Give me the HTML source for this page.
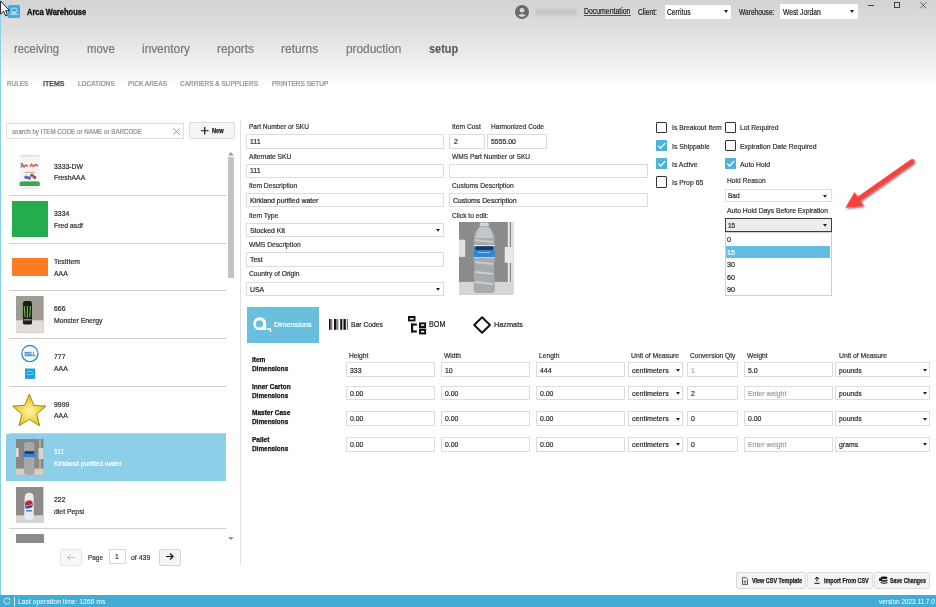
<!DOCTYPE html>
<html><head><meta charset="utf-8"><style>
html,body{margin:0;padding:0;}
body{width:936px;height:607px;position:relative;overflow:hidden;background:#fff;font-family:"Liberation Sans",sans-serif;}
.t{position:absolute;white-space:nowrap;line-height:1.117;transform-origin:0 0;-webkit-text-stroke-width:0.2px;}
.r{position:absolute;box-sizing:border-box;}
svg{position:absolute;overflow:visible;}
</style></head><body>
<div class="r" style="left:0px;top:0px;width:936px;height:88px;background:linear-gradient(#d3d3d3 0%,#e1e1e1 40%,#f2f2f2 75%,#fff 100%);"></div>
<div class="r" style="left:0px;top:0px;width:1px;height:595px;background:#8dd0e8;"></div>
<div class="r" style="left:7.8px;top:4.7px;width:12.7px;height:13.2px;background:#3aaee0;border-radius:1.6px;"></div>
<svg style="left:0;top:0" width="22" height="20" viewBox="0 0 22 20"><ellipse cx="14.1" cy="10.1" rx="3.3" ry="2.1" stroke="#c4eafa" stroke-width="0.9" fill="none"/><rect x="11.3" y="12.2" width="5.6" height="1.3" fill="#c4eafa"/><rect x="9.4" y="14.2" width="9.4" height="0.8" fill="#c4eafa"/></svg>
<div class="t" style="left:26.70px;top:6.79px;font-size:9.4px;color:#111;font-weight:bold;-webkit-text-stroke-width:0.25px;transform:scaleX(0.803);-webkit-text-stroke-width:0.4px;">Arca Warehouse</div>
<svg style="left:514.5px;top:4.5px" width="14" height="14" viewBox="0 0 14 14"><circle cx="7" cy="7" r="7" fill="#6a6a6a"/><circle cx="7" cy="5.3" r="2.3" fill="#dcdcdc"/><path d="M3.2 10.6 Q7 7.6 10.8 10.6 Q7 13 3.2 10.6Z" fill="#dcdcdc"/></svg>
<div class="r" style="left:535px;top:8.5px;width:42px;height:6.5px;background:#c4c4c4;filter:blur(1.8px);border-radius:3px;"></div>
<div class="t" style="left:584.00px;top:7.28px;font-size:8.2px;color:#222;transform:scaleX(0.843);">Documentation</div>
<div class="r" style="left:584px;top:15.2px;width:46.5px;height:0.7px;background:#555;"></div>
<div class="t" style="left:637.90px;top:7.88px;font-size:8.2px;color:#222;transform:scaleX(0.818);">Client:</div>
<div class="r" style="left:664.5px;top:4.5px;width:66.5px;height:14.5px;background:#fff;"></div>
<div class="t" style="left:667.40px;top:8.28px;font-size:8.2px;color:#222;transform:scaleX(0.822);">Cerritus</div>
<svg style="left:723.5px;top:10px" width="4" height="3"><path d="M0 0H4L2 3Z" fill="#222"/></svg>
<div class="t" style="left:738.50px;top:7.88px;font-size:8.2px;color:#222;transform:scaleX(0.808);">Warehouse:</div>
<div class="r" style="left:780px;top:4px;width:78px;height:15px;background:#fff;"></div>
<div class="t" style="left:782.80px;top:8.28px;font-size:8.2px;color:#222;transform:scaleX(0.822);">West Jordan</div>
<svg style="left:850.3px;top:10px" width="4" height="3"><path d="M0 0H4L2 3Z" fill="#222"/></svg>
<div class="r" style="left:868px;top:4.6px;width:5.8px;height:0.8px;background:#444;"></div>
<div class="r" style="left:893.6px;top:2.2px;width:6.2px;height:6px;border:0.8px solid #444;"></div>
<svg style="left:919.5px;top:2px" width="7" height="7"><path d="M0.3 0.3L6.3 6.3M6.3 0.3L0.3 6.3" stroke="#444" stroke-width="0.8"/></svg>
<svg style="left:0px;top:0px" width="14" height="20" viewBox="0 0 14 20"><path d="M0.6 1 L0.6 14 L3.7 11.3 L5.7 16 L7.5 15.2 L5.6 10.7 L9.6 10.7 Z" fill="#fff" stroke="#222" stroke-width="1" stroke-linejoin="round"/></svg>
<div class="t" style="left:14.40px;top:41.64px;font-size:13px;color:#777;transform:scaleX(0.865);">receiving</div>
<div class="t" style="left:86.70px;top:41.64px;font-size:13px;color:#777;transform:scaleX(0.871);">move</div>
<div class="t" style="left:141.80px;top:41.64px;font-size:13px;color:#777;transform:scaleX(0.910);">inventory</div>
<div class="t" style="left:217.20px;top:41.64px;font-size:13px;color:#777;transform:scaleX(0.915);">reports</div>
<div class="t" style="left:281.40px;top:41.64px;font-size:13px;color:#777;transform:scaleX(0.920);">returns</div>
<div class="t" style="left:345.80px;top:41.64px;font-size:13px;color:#777;transform:scaleX(0.911);">production</div>
<div class="t" style="left:428.60px;top:41.64px;font-size:13px;color:#5a5a5a;font-weight:bold;-webkit-text-stroke-width:0.25px;transform:scaleX(0.842);-webkit-text-stroke-width:0.1px;">setup</div>
<div class="t" style="left:7.40px;top:79.76px;font-size:8px;color:#8a8a8a;transform:scaleX(0.798);">RULES</div>
<div class="t" style="left:42.60px;top:79.76px;font-size:8px;color:#555;font-weight:bold;-webkit-text-stroke-width:0.25px;transform:scaleX(0.879);">ITEMS</div>
<div class="t" style="left:77.70px;top:79.76px;font-size:8px;color:#8a8a8a;transform:scaleX(0.804);">LOCATIONS</div>
<div class="t" style="left:127.70px;top:79.76px;font-size:8px;color:#8a8a8a;transform:scaleX(0.820);">PICK AREAS</div>
<div class="t" style="left:180.30px;top:79.76px;font-size:8px;color:#8a8a8a;transform:scaleX(0.812);">CARRIERS &amp; SUPPLIERS</div>
<div class="t" style="left:272.20px;top:79.76px;font-size:8px;color:#8a8a8a;transform:scaleX(0.813);">PRINTERS SETUP</div>
<div class="r" style="left:240px;top:119.5px;width:1px;height:445px;background:#dfe0e6;"></div>
<div class="r" style="left:6px;top:123px;width:178px;height:15.5px;border:1px solid #dedede;background:#fff;"></div>
<div class="t" style="left:11.50px;top:127.64px;font-size:7.8px;color:#8a8a8a;transform:scaleX(0.798);">search by ITEM CODE or NAME or BARCODE</div>
<svg style="left:173.2px;top:128px" width="7" height="7"><path d="M0.3 0.3L6.7 6.7M6.7 0.3L0.3 6.7" stroke="#888" stroke-width="0.8"/></svg>
<div class="r" style="left:189.4px;top:122px;width:45.2px;height:17.4px;border:1px solid #dcdcdc;background:#f5f5f5;border-radius:2px;"></div>
<svg style="left:201px;top:127px" width="7.5" height="7.5"><path d="M3.75 0V7.5M0 3.75H7.5" stroke="#111" stroke-width="1.2"/></svg>
<div class="t" style="left:212.00px;top:126.91px;font-size:7.5px;color:#111;font-weight:bold;-webkit-text-stroke-width:0.25px;transform:scaleX(0.745);">New</div>
<div class="t" style="left:53.80px;top:162.64px;font-size:7.8px;color:#262626;transform:scaleX(0.880);">3333-DW</div>
<div class="t" style="left:53.80px;top:174.44px;font-size:7.8px;color:#262626;transform:scaleX(0.880);">FreshAAA</div>
<div class="t" style="left:53.80px;top:210.24px;font-size:7.8px;color:#262626;transform:scaleX(0.880);">3334</div>
<div class="t" style="left:53.80px;top:222.04px;font-size:7.8px;color:#262626;transform:scaleX(0.880);">Fred asdf</div>
<div class="t" style="left:53.80px;top:257.84px;font-size:7.8px;color:#262626;transform:scaleX(0.880);">TestItem</div>
<div class="t" style="left:53.80px;top:269.64px;font-size:7.8px;color:#262626;transform:scaleX(0.880);">AAA</div>
<div class="t" style="left:53.80px;top:305.44px;font-size:7.8px;color:#262626;transform:scaleX(0.880);">666</div>
<div class="t" style="left:53.80px;top:317.24px;font-size:7.8px;color:#262626;transform:scaleX(0.880);">Monster Energy</div>
<div class="t" style="left:53.80px;top:353.04px;font-size:7.8px;color:#262626;transform:scaleX(0.880);">777</div>
<div class="t" style="left:53.80px;top:364.84px;font-size:7.8px;color:#262626;transform:scaleX(0.880);">AAA</div>
<div class="t" style="left:53.80px;top:400.64px;font-size:7.8px;color:#262626;transform:scaleX(0.880);">9999</div>
<div class="t" style="left:53.80px;top:412.44px;font-size:7.8px;color:#262626;transform:scaleX(0.880);">AAA</div>
<div class="r" style="left:6.3px;top:433.6px;width:220.1px;height:47.8px;background:#8dcfe8;"></div>
<div class="t" style="left:53.80px;top:448.24px;font-size:7.8px;color:#fff;transform:scaleX(0.880);">111</div>
<div class="t" style="left:53.80px;top:460.04px;font-size:7.8px;color:#fff;transform:scaleX(0.880);">Kirkland purified water</div>
<div class="t" style="left:53.80px;top:495.84px;font-size:7.8px;color:#262626;transform:scaleX(0.880);">222</div>
<div class="t" style="left:53.80px;top:507.64px;font-size:7.8px;color:#262626;transform:scaleX(0.880);">diet Pepsi</div>
<div class="r" style="left:9px;top:195.3px;width:217.4px;height:1px;background:#cfcfcf;"></div>
<div class="r" style="left:9px;top:243px;width:217.4px;height:1px;background:#cfcfcf;"></div>
<div class="r" style="left:9px;top:290.3px;width:217.4px;height:1px;background:#cfcfcf;"></div>
<div class="r" style="left:9px;top:338.2px;width:217.4px;height:1px;background:#cfcfcf;"></div>
<div class="r" style="left:9px;top:386px;width:217.4px;height:1px;background:#cfcfcf;"></div>
<div class="r" style="left:9px;top:433.2px;width:217.4px;height:1px;background:#cfcfcf;"></div>
<div class="r" style="left:9px;top:528.4px;width:217.4px;height:1px;background:#cfcfcf;"></div>
<svg style="left:228px;top:151.5px" width="6" height="4"><path d="M0 3.5H5.8L2.9 0Z" fill="#9a9a9a"/></svg>
<div class="r" style="left:227.5px;top:157.4px;width:6.4px;height:120.6px;background:#c2c2c2;"></div>
<svg style="left:228px;top:536.5px" width="6" height="4"><path d="M0 0H5.8L2.9 3.3Z" fill="#9a9a9a"/></svg>
<svg style="left:19px;top:154px" width="22" height="36" viewBox="0 0 22 36"><ellipse cx="10.5" cy="34" rx="10" ry="1.5" fill="#e4e4e4"/><rect x="0.6" y="0.8" width="20.1" height="33.4" rx="1.8" fill="#f3f5f6"/><rect x="0.6" y="0.8" width="20.1" height="1.8" fill="#dfe3e6"/><path d="M2 13.5 L3.5 10.5 L5 13 L7 11 L9 12.5 M11 12.5 L12.5 10.5 L14.5 12.5 L16.5 10.5 L19 12" stroke="#e4553c" stroke-width="1.5" fill="none"/><rect x="1.5" y="9" width="2.5" height="1.4" fill="#3aa84a"/><rect x="6" y="17.8" width="10" height="0.9" fill="#ee8c5a"/><circle cx="7.2" cy="23.2" r="1.8" fill="#3a63c8"/><circle cx="10.2" cy="24" r="1.8" fill="#8740b8"/><circle cx="12.9" cy="21.3" r="1.8" fill="#2f8a48"/><circle cx="15.5" cy="23.2" r="1.8" fill="#d83a3a"/><path d="M0.6 28 Q5 26.6 10.5 27.6 Q16 26.6 20.7 27.8 L20.7 32 L0.6 32Z" fill="#3aa84a"/></svg>
<div class="r" style="left:12px;top:201.2px;width:36px;height:35.9px;background:#24ad4e;"></div>
<div class="r" style="left:12px;top:258px;width:36px;height:17.7px;background:#fb7c22;"></div>
<svg style="left:16.3px;top:296px" width="27.6" height="36.6" viewBox="0 0 27.6 36.6"><rect width="27.6" height="36.6" fill="#a19b95"/><rect y="24.3" width="27.6" height="12.3" fill="#e0dcd6"/><path d="M6.9 8 Q6.9 5 9 5 L14 5 Q16 5 16 8 L16 27 Q16 28.6 14 28.6 L9 28.6 Q6.9 28.6 6.9 27Z" fill="#1b1d1b"/><path d="M8.3 10 L9 21 M11.4 10 L11.4 22 M14.4 10 L13.8 21" stroke="#5fbf3a" stroke-width="1.1"/><rect x="7.5" y="23" width="8" height="1.5" fill="#8a8f8a"/></svg>
<svg style="left:20.8px;top:345.3px" width="18" height="35" viewBox="0 0 18 35"><circle cx="8.9" cy="8.6" r="8.1" fill="none" stroke="#1d8fd2" stroke-width="1.3"/><text x="8.9" y="10.5" font-family="Liberation Sans" font-weight="bold" font-size="5" fill="#1d8fd2" stroke="#1d8fd2" stroke-width="0.35" text-anchor="middle" textLength="11" lengthAdjust="spacingAndGlyphs">DELL</text><rect x="4" y="23.5" width="10.2" height="10.4" fill="#1ba3e3"/><path d="M5.5 27 Q9 25 12.5 27.5 M5.5 29.5 H12.5" stroke="#bfe8fa" stroke-width="0.6" fill="none"/></svg>
<svg style="left:12.3px;top:393.2px" width="35" height="34" viewBox="0 0 35 34"><defs><radialGradient id="sg" cx="0.5" cy="0.55" r="0.55"><stop offset="0" stop-color="#fbf3a8"/><stop offset="0.55" stop-color="#f1d84a"/><stop offset="1" stop-color="#d9b425"/></radialGradient></defs><path d="M17.30 1.00 L21.85 12.33 L34.04 13.16 L24.66 20.99 L27.65 32.84 L17.30 26.34 L6.95 32.84 L9.94 20.99 L0.56 13.16 L12.75 12.33Z" fill="url(#sg)" stroke="#a98512" stroke-width="1" stroke-linejoin="round"/></svg>
<svg style="left:16.4px;top:439.1px" width="27.5" height="36.3" viewBox="0 0 27.5 36.3"><rect width="27.5" height="36.3" fill="#8a8682"/><rect y="29.6" width="27.5" height="6.7" fill="#d6cec6"/><rect x="0" y="9" width="2.6" height="9" fill="#e0dcd8"/><rect x="22.5" y="9" width="5" height="11" fill="#dcd8d4"/><rect x="23.5" y="0" width="1" height="30" fill="#cfcac6"/><rect x="8" y="3" width="10.4" height="33" rx="3" fill="#a6a8aa"/><rect x="7.3" y="11.8" width="11.8" height="6.3" fill="#2d82d2"/><rect x="9" y="12.5" width="8.5" height="2" fill="#1c2744"/></svg>
<svg style="left:16.3px;top:486.9px" width="27.4" height="36" viewBox="0 0 27.4 36"><rect width="27.4" height="36" fill="#8d8a87"/><rect y="28.3" width="27.4" height="7.7" fill="#d8d4d0"/><path d="M8.6 14 Q8 6 12.5 5.8 Q17.5 5.6 17.6 10 L17.8 30 Q17.6 33 13 33 Q8.4 33 8.2 30Z" fill="#e8eaec"/><path d="M9.2 18.5 A4 4 0 0 1 17 16.2 Q13 19.5 9.2 18.5Z" fill="#c9243a"/><path d="M9.2 19 Q13 20 17 17 Q17 22 9.6 21.5Z" fill="#1f4e9e"/><rect x="10" y="23" width="6" height="1.6" fill="#5a7fc0"/></svg>
<div class="r" style="left:16.3px;top:534.1px;width:27.4px;height:8.7px;background:#8d8a88;"></div>
<div class="r" style="left:59.5px;top:548.6px;width:22.5px;height:17.4px;border:1px solid #e4e4e4;background:#f7f7f7;border-radius:2px;"></div>
<svg style="left:66.5px;top:553.5px" width="8" height="7"><path d="M0.5 3.5H7.5M3.5 0.5L0.5 3.5L3.5 6.5" stroke="#bbb" stroke-width="0.9" fill="none"/></svg>
<div class="t" style="left:88.00px;top:554.04px;font-size:7.8px;color:#333;transform:scaleX(0.824);">Page</div>
<div class="r" style="left:109px;top:549.4px;width:16.6px;height:14.3px;border:1px solid #d8d8d8;background:#fff;"></div>
<div class="t" style="left:115.30px;top:553.14px;font-size:7.8px;color:#333;transform:scaleX(0.880);">1</div>
<div class="t" style="left:131.30px;top:553.84px;font-size:7.8px;color:#333;transform:scaleX(0.893);">of  439</div>
<div class="r" style="left:158.5px;top:548.6px;width:22.3px;height:17.4px;border:1px solid #d4d4d4;background:#f4f4f4;border-radius:2px;"></div>
<svg style="left:165.5px;top:553.3px" width="8" height="7"><path d="M0 3.5H7M4 0.5L7 3.5L4 6.5" stroke="#111" stroke-width="1.2" fill="none"/></svg>
<div class="r" style="left:0px;top:595px;width:936px;height:12px;background:#41acd6;"></div>
<svg style="left:3px;top:597px" width="8" height="8" viewBox="0 0 8 8"><path d="M6.6 2.6 A3 3 0 1 0 7 4.6" stroke="#d8f0fa" stroke-width="0.9" fill="none"/><path d="M5.3 1.2 L7.3 1.6 L6.8 3.6Z" fill="#d8f0fa"/></svg>
<div class="r" style="left:14.3px;top:597px;width:0.8px;height:9px;background:#d8f0fa;"></div>
<div class="t" style="left:18.00px;top:598.14px;font-size:7.8px;color:#fff;transform:scaleX(0.868);-webkit-text-stroke-width:0;">Last operation time:  1266 ms</div>
<div class="t" style="left:878.50px;top:597.84px;font-size:7.8px;color:#fff;transform:scaleX(0.820);-webkit-text-stroke-width:0;">version 2023.11.7.0</div>
<div class="t" style="left:249.00px;top:123.22px;font-size:7.6px;color:#2e2e2e;transform:scaleX(0.861);">Part Number or SKU</div>
<div class="r" style="left:246.3px;top:134.2px;width:197.4px;height:14.4px;border:1px solid #dcdcdc;background:#fff;"></div>
<div class="t" style="left:250.10px;top:138.11px;font-size:7.5px;color:#262626;transform:scaleX(0.920);">111</div>
<div class="t" style="left:249.00px;top:152.62px;font-size:7.6px;color:#2e2e2e;transform:scaleX(0.880);">Alternate SKU</div>
<div class="r" style="left:246.3px;top:163.5px;width:197.4px;height:14.4px;border:1px solid #dcdcdc;background:#fff;"></div>
<div class="t" style="left:250.10px;top:167.41px;font-size:7.5px;color:#262626;transform:scaleX(0.920);">111</div>
<div class="t" style="left:249.00px;top:182.32px;font-size:7.6px;color:#2e2e2e;transform:scaleX(0.880);">Item Description</div>
<div class="r" style="left:246.3px;top:193.1px;width:197.4px;height:14.4px;border:1px solid #dcdcdc;background:#fff;"></div>
<div class="t" style="left:250.10px;top:197.01px;font-size:7.5px;color:#262626;transform:scaleX(0.920);">Kirkland purified water</div>
<div class="t" style="left:249.00px;top:211.72px;font-size:7.6px;color:#2e2e2e;transform:scaleX(0.880);">Item Type</div>
<div class="r" style="left:246.3px;top:222.6px;width:197.4px;height:14.4px;border:1px solid #dcdcdc;background:#fff;"></div>
<div class="t" style="left:250.10px;top:226.51px;font-size:7.5px;color:#262626;transform:scaleX(0.920);">Stocked Kit</div>
<svg style="left:436.20000000000005px;top:228.6px" width="4" height="3"><path d="M0 0H4L2 2.8Z" fill="#222"/></svg>
<div class="t" style="left:249.00px;top:241.22px;font-size:7.6px;color:#2e2e2e;transform:scaleX(0.880);">WMS Description</div>
<div class="r" style="left:246.3px;top:252.3px;width:197.4px;height:14.4px;border:1px solid #dcdcdc;background:#fff;"></div>
<div class="t" style="left:250.10px;top:256.21px;font-size:7.5px;color:#262626;transform:scaleX(0.920);">Test</div>
<div class="t" style="left:249.00px;top:270.42px;font-size:7.6px;color:#2e2e2e;transform:scaleX(0.880);">Country of Origin</div>
<div class="r" style="left:246.3px;top:281.7px;width:197.4px;height:14.4px;border:1px solid #dcdcdc;background:#fff;"></div>
<div class="t" style="left:250.10px;top:285.61px;font-size:7.5px;color:#262626;transform:scaleX(0.920);">USA</div>
<svg style="left:436.20000000000005px;top:287.7px" width="4" height="3"><path d="M0 0H4L2 2.8Z" fill="#222"/></svg>
<div class="t" style="left:452.20px;top:123.22px;font-size:7.6px;color:#2e2e2e;transform:scaleX(0.886);">Item Cost</div>
<div class="r" style="left:449.2px;top:134.2px;width:35.4px;height:14.4px;border:1px solid #dcdcdc;background:#fff;"></div>
<div class="t" style="left:453.50px;top:138.11px;font-size:7.5px;color:#262626;transform:scaleX(0.920);">2</div>
<div class="t" style="left:490.60px;top:123.22px;font-size:7.6px;color:#2e2e2e;transform:scaleX(0.865);">Harmonized Code</div>
<div class="r" style="left:487.4px;top:134.2px;width:59.6px;height:14.4px;border:1px solid #dcdcdc;background:#fff;"></div>
<div class="t" style="left:491.30px;top:138.11px;font-size:7.5px;color:#262626;transform:scaleX(0.920);">5555.00</div>
<div class="t" style="left:452.20px;top:152.62px;font-size:7.6px;color:#2e2e2e;transform:scaleX(0.865);">WMS Part Number or SKU</div>
<div class="r" style="left:449.2px;top:163.5px;width:198.6px;height:14.4px;border:1px solid #dcdcdc;background:#fff;"></div>
<div class="t" style="left:452.20px;top:182.32px;font-size:7.6px;color:#2e2e2e;transform:scaleX(0.880);">Customs Description</div>
<div class="r" style="left:449.2px;top:193.1px;width:198.6px;height:14.4px;border:1px solid #dcdcdc;background:#fff;"></div>
<div class="t" style="left:453.40px;top:197.01px;font-size:7.5px;color:#262626;transform:scaleX(0.920);">Customs Description</div>
<div class="t" style="left:452.30px;top:211.62px;font-size:7.6px;color:#2e2e2e;transform:scaleX(0.880);">Click to edit:</div>
<svg style="left:458.7px;top:222px" width="54.3" height="72.4" viewBox="0 0 54.3 72.4"><rect width="54.3" height="72.4" fill="#8b8b8b"/><rect y="59.9" width="54.3" height="12.5" fill="#d6d6d6"/><rect x="0" y="17.7" width="6.2" height="17.2" fill="#e2e2e2"/><rect x="48.8" y="0" width="2" height="60" fill="#e6e6e6"/><rect x="52" y="0" width="2" height="60" fill="#dedede"/><rect x="45.7" y="25" width="8.6" height="15.8" fill="#e8e8e8"/><rect x="20.7" y="0.6" width="9.2" height="4" rx="1.5" fill="#d4d6d8"/><path d="M20.7 4.6 C17 8 14.7 12 14.7 18.4 L14.7 36.2 Q15.4 41 15.4 46 Q14.7 52 14.7 60 L14.7 68 Q14.7 71 18 71 L32 71 Q35.8 71 35.8 68 L35.8 60 Q35.2 52 35.2 46 Q35.2 41 35.8 36.2 L35.8 18.4 C35.8 12 33 8 29.9 4.6Z" fill="#a7abae"/><path d="M21 5 C18.5 8 17 11 16.5 16 L34 16 C33.5 11 32 8 29.5 5Z" fill="#c4c7ca"/><path d="M16 18 L34 20 M16 40 L34 42 M16 50 L34 52 M16 60 L34 62" stroke="#c8ccd0" stroke-width="2"/><rect x="14.7" y="23" width="21.1" height="13.2" fill="#2f86d4"/><rect x="14.7" y="23" width="21.1" height="1.3" fill="#e0e6ec"/><rect x="16.5" y="24.3" width="17.5" height="3.6" fill="#243452"/><rect x="14.7" y="35.2" width="21.1" height="1" fill="#e0e6ec"/><rect x="19" y="30" width="12" height="1" fill="#8fc3ee"/></svg>
<div class="r" style="left:655.9px;top:121.5px;width:11.3px;height:11.5px;border:1.4px solid #333;background:#fff;border-radius:1px;"></div>
<div class="t" style="left:671.60px;top:124.44px;font-size:7.8px;color:#2e2e2e;transform:scaleX(0.875);">Is Breakout Item</div>
<div class="r" style="left:655.9px;top:139.7px;width:11.3px;height:11.5px;background:#4db3dd;border-radius:0.5px;"></div>
<svg style="left:655.9px;top:139.7px" width="11.2" height="11.2" viewBox="0 0 11 11"><path d="M2.2 5.5 L4.5 7.9 L9 3.1" stroke="#fff" stroke-width="1.2" fill="none"/></svg>
<div class="t" style="left:671.60px;top:142.64px;font-size:7.8px;color:#2e2e2e;transform:scaleX(0.880);">Is Shippable</div>
<div class="r" style="left:655.9px;top:157.9px;width:11.3px;height:11.5px;background:#4db3dd;border-radius:0.5px;"></div>
<svg style="left:655.9px;top:157.9px" width="11.2" height="11.2" viewBox="0 0 11 11"><path d="M2.2 5.5 L4.5 7.9 L9 3.1" stroke="#fff" stroke-width="1.2" fill="none"/></svg>
<div class="t" style="left:671.60px;top:160.84px;font-size:7.8px;color:#2e2e2e;transform:scaleX(0.880);">Is Active</div>
<div class="r" style="left:655.9px;top:176.1px;width:11.3px;height:11.5px;border:1.4px solid #333;background:#fff;border-radius:1px;"></div>
<div class="t" style="left:671.60px;top:179.04px;font-size:7.8px;color:#2e2e2e;transform:scaleX(0.880);">Is Prop 65</div>
<div class="r" style="left:724.5px;top:121.5px;width:11.3px;height:11.5px;border:1.4px solid #333;background:#fff;border-radius:1px;"></div>
<div class="t" style="left:740.20px;top:124.44px;font-size:7.8px;color:#2e2e2e;transform:scaleX(0.862);">Lot Required</div>
<div class="r" style="left:724.5px;top:139.7px;width:11.3px;height:11.5px;border:1.4px solid #333;background:#fff;border-radius:1px;"></div>
<div class="t" style="left:740.20px;top:142.64px;font-size:7.8px;color:#2e2e2e;transform:scaleX(0.880);">Expiration Date Required</div>
<div class="r" style="left:724.5px;top:157.9px;width:11.3px;height:11.5px;background:#4db3dd;border-radius:0.5px;"></div>
<svg style="left:724.5px;top:157.9px" width="11.2" height="11.2" viewBox="0 0 11 11"><path d="M2.2 5.5 L4.5 7.9 L9 3.1" stroke="#fff" stroke-width="1.2" fill="none"/></svg>
<div class="t" style="left:740.20px;top:160.84px;font-size:7.8px;color:#2e2e2e;transform:scaleX(0.880);">Auto Hold</div>
<div class="t" style="left:727.20px;top:177.42px;font-size:7.6px;color:#2e2e2e;transform:scaleX(0.880);">Hold Reason</div>
<div class="r" style="left:724.6px;top:188.8px;width:107.1px;height:13.7px;border:1px solid #dcdcdc;background:#fff;"></div>
<div class="t" style="left:727.80px;top:191.80px;font-size:7.4px;color:#262626;transform:scaleX(0.880);">Bad</div>
<svg style="left:823.3px;top:194.6px" width="4" height="3"><path d="M0 0H4L2 2.8Z" fill="#222"/></svg>
<div class="t" style="left:727.40px;top:207.12px;font-size:7.6px;color:#2e2e2e;transform:scaleX(0.892);">Auto Hold Days Before Expiration</div>
<div class="r" style="left:724.6px;top:232px;width:107.1px;height:64.3px;border:1px solid #cfcfcf;background:#fff;"></div>
<div class="r" style="left:724.6px;top:217.5px;width:107.1px;height:14.6px;border:1.3px solid #3c3c3c;background:#ececec;"></div>
<div class="t" style="left:727.80px;top:221.80px;font-size:7.4px;color:#262626;transform:scaleX(0.880);">15</div>
<svg style="left:823.3px;top:223.6px" width="4" height="3"><path d="M0 0H4L2 2.8Z" fill="#222"/></svg>
<div class="r" style="left:725.7px;top:246px;width:104.5px;height:12.2px;background:#62bde0;"></div>
<div class="t" style="left:727.40px;top:236.26px;font-size:8px;color:#262626;transform:scaleX(0.900);">0</div>
<div class="t" style="left:727.40px;top:248.66px;font-size:8px;color:#fff;transform:scaleX(0.900);">15</div>
<div class="t" style="left:727.40px;top:261.06px;font-size:8px;color:#262626;transform:scaleX(0.900);">30</div>
<div class="t" style="left:727.40px;top:273.56px;font-size:8px;color:#262626;transform:scaleX(0.900);">60</div>
<div class="t" style="left:727.40px;top:286.06px;font-size:8px;color:#262626;transform:scaleX(0.900);">90</div>
<svg style="left:0;top:0" width="936" height="607"><defs><filter id="sh" x="-20%" y="-20%" width="140%" height="140%"><feDropShadow dx="1" dy="1.2" stdDeviation="0.8" flood-color="#000" flood-opacity="0.55"/></filter></defs><g filter="url(#sh)"><path d="M912.1 161.5 L858 199.5" stroke="#fb4141" stroke-width="4.9" stroke-linecap="round"/><path d="M845.5 207.7 L854.5 192.1 L863.7 206 Z" fill="#fb4141"/></g></svg>
<div class="r" style="left:246.5px;top:307.2px;width:72.5px;height:35.4px;background:#69bfdc;"></div>
<svg style="left:252px;top:316px" width="21" height="17" viewBox="0 0 21 17"><path fill-rule="evenodd" fill="#fff" d="M7.6 1.2 A6.4 6.4 0 1 0 7.6 14 H14.2 V7.6 A6.4 6.4 0 0 0 7.6 1.2Z M7.5 4.3 A3.6 3.6 0 1 1 7.5 11.5 A3.6 3.6 0 1 1 7.5 4.3Z"/><path d="M15 13 H18.5 V16" stroke="#fff" stroke-width="1.3" fill="none"/></svg>
<div class="t" style="left:274.20px;top:321.04px;font-size:7.8px;color:#fff;transform:scaleX(0.923);">Dimensions</div>
<svg style="left:329.2px;top:319.2px" width="19" height="11" viewBox="0 0 19 11"><g fill="#111"><rect x="0" width="1.7" height="10.8"/><rect x="2.5" width="0.7" height="10.8"/><rect x="5" width="2.5" height="10.8"/><rect x="8.5" width="0.7" height="10.8"/><rect x="11.3" width="1.7" height="10.8"/><rect x="13.7" width="0.7" height="10.8"/><rect x="14.8" width="2" height="10.8"/><rect x="17.9" width="0.7" height="10.8"/></g></svg>
<div class="t" style="left:350.80px;top:321.04px;font-size:7.8px;color:#222;transform:scaleX(0.866);">Bar Codes</div>
<svg style="left:408px;top:315.5px" width="19" height="19" viewBox="0 0 19 19"><g fill="#111"><rect x="0" y="0" width="7.5" height="5.4"/><rect x="3" y="7.5" width="5.9" height="2.1"/><rect x="3" y="7.5" width="2.2" height="9"/><rect x="3" y="14.4" width="5.9" height="2.1"/><rect x="11" y="6.4" width="7.1" height="5.6"/><rect x="11" y="13" width="7.1" height="5.4"/></g><g fill="#fff"><rect x="1.9" y="2.1" width="3.7" height="1.4"/><rect x="13" y="8.3" width="3.2" height="1.5"/><rect x="13" y="14.9" width="3.2" height="1.5"/></g><rect x="11" y="12" width="7.1" height="1" fill="#999"/></svg>
<div class="t" style="left:429.40px;top:319.52px;font-size:8.6px;color:#222;transform:scaleX(0.837);">BOM</div>
<svg style="left:472.8px;top:315.7px" width="18.2" height="18" viewBox="0 0 18.2 18"><path d="M9.1 1.2 L17 9 L9.1 16.8 L1.2 9Z" fill="none" stroke="#111" stroke-width="1.9" stroke-linejoin="round"/></svg>
<div class="t" style="left:494.00px;top:320.84px;font-size:7.8px;color:#222;transform:scaleX(0.939);">Hazmats</div>
<div class="t" style="left:251.80px;top:356.10px;font-size:7.4px;color:#111;font-weight:bold;-webkit-text-stroke-width:0.25px;transform:scaleX(0.880);">Item</div>
<div class="t" style="left:251.80px;top:365.10px;font-size:7.4px;color:#111;font-weight:bold;-webkit-text-stroke-width:0.25px;transform:scaleX(0.865);">Dimensions</div>
<div class="t" style="left:251.80px;top:383.20px;font-size:7.4px;color:#111;font-weight:bold;-webkit-text-stroke-width:0.25px;transform:scaleX(0.880);">Inner Carton</div>
<div class="t" style="left:251.80px;top:392.20px;font-size:7.4px;color:#111;font-weight:bold;-webkit-text-stroke-width:0.25px;transform:scaleX(0.865);">Dimensions</div>
<div class="t" style="left:251.80px;top:409.10px;font-size:7.4px;color:#111;font-weight:bold;-webkit-text-stroke-width:0.25px;transform:scaleX(0.880);">Master Case</div>
<div class="t" style="left:251.80px;top:418.10px;font-size:7.4px;color:#111;font-weight:bold;-webkit-text-stroke-width:0.25px;transform:scaleX(0.865);">Dimensions</div>
<div class="t" style="left:251.80px;top:435.60px;font-size:7.4px;color:#111;font-weight:bold;-webkit-text-stroke-width:0.25px;transform:scaleX(0.880);">Pallet</div>
<div class="t" style="left:251.80px;top:444.60px;font-size:7.4px;color:#111;font-weight:bold;-webkit-text-stroke-width:0.25px;transform:scaleX(0.865);">Dimensions</div>
<div class="t" style="left:349.40px;top:351.62px;font-size:7.6px;color:#2e2e2e;transform:scaleX(0.880);">Height</div>
<div class="t" style="left:443.90px;top:351.62px;font-size:7.6px;color:#2e2e2e;transform:scaleX(0.880);">Width</div>
<div class="t" style="left:538.80px;top:351.62px;font-size:7.6px;color:#2e2e2e;transform:scaleX(0.880);">Length</div>
<div class="t" style="left:630.90px;top:351.62px;font-size:7.6px;color:#2e2e2e;transform:scaleX(0.895);">Unit of Measure</div>
<div class="t" style="left:689.70px;top:351.62px;font-size:7.6px;color:#2e2e2e;transform:scaleX(0.865);">Conversion Qty</div>
<div class="t" style="left:746.80px;top:351.62px;font-size:7.6px;color:#2e2e2e;transform:scaleX(0.880);">Weight</div>
<div class="t" style="left:838.60px;top:351.62px;font-size:7.6px;color:#2e2e2e;transform:scaleX(0.895);">Unit of Measure</div>
<div class="r" style="left:346.2px;top:362.4px;width:89.3px;height:14.9px;border:1px solid #dcdcdc;background:#fff;"></div>
<div class="t" style="left:350.20px;top:366.56px;font-size:7.5px;color:#262626;transform:scaleX(0.920);">333</div>
<div class="r" style="left:441.2px;top:362.4px;width:88.6px;height:14.9px;border:1px solid #dcdcdc;background:#fff;"></div>
<div class="t" style="left:445.20px;top:366.56px;font-size:7.5px;color:#262626;transform:scaleX(0.920);">10</div>
<div class="r" style="left:535.5px;top:362.4px;width:89.2px;height:14.9px;border:1px solid #dcdcdc;background:#fff;"></div>
<div class="t" style="left:539.50px;top:366.56px;font-size:7.5px;color:#262626;transform:scaleX(0.920);">444</div>
<div class="r" style="left:627.6px;top:362.4px;width:55.8px;height:14.9px;border:1px solid #dcdcdc;background:#fff;"></div>
<div class="t" style="left:631.60px;top:366.56px;font-size:7.5px;color:#262626;transform:scaleX(0.947);">centimeters</div>
<svg style="left:675.9px;top:368.65px" width="4" height="3"><path d="M0 0H4L2 2.8Z" fill="#222"/></svg>
<div class="r" style="left:686.5px;top:362.4px;width:51.3px;height:14.9px;border:1px solid #dcdcdc;background:#fff;"></div>
<div class="t" style="left:690.50px;top:366.56px;font-size:7.5px;color:#aaa;transform:scaleX(0.920);">1</div>
<div class="r" style="left:743.9px;top:362.4px;width:88.7px;height:14.9px;border:1px solid #dcdcdc;background:#fff;"></div>
<div class="t" style="left:747.90px;top:366.56px;font-size:7.5px;color:#262626;transform:scaleX(0.920);">5.0</div>
<div class="r" style="left:835.4px;top:362.4px;width:95px;height:14.9px;border:1px solid #dcdcdc;background:#fff;"></div>
<div class="t" style="left:839.40px;top:366.56px;font-size:7.5px;color:#262626;transform:scaleX(0.920);">pounds</div>
<svg style="left:922.9px;top:368.65px" width="4" height="3"><path d="M0 0H4L2 2.8Z" fill="#222"/></svg>
<div class="r" style="left:346.2px;top:385.6px;width:89.3px;height:14.9px;border:1px solid #dcdcdc;background:#fff;"></div>
<div class="t" style="left:350.20px;top:389.76px;font-size:7.5px;color:#262626;transform:scaleX(0.920);">0.00</div>
<div class="r" style="left:441.2px;top:385.6px;width:88.6px;height:14.9px;border:1px solid #dcdcdc;background:#fff;"></div>
<div class="t" style="left:445.20px;top:389.76px;font-size:7.5px;color:#262626;transform:scaleX(0.920);">0.00</div>
<div class="r" style="left:535.5px;top:385.6px;width:89.2px;height:14.9px;border:1px solid #dcdcdc;background:#fff;"></div>
<div class="t" style="left:539.50px;top:389.76px;font-size:7.5px;color:#262626;transform:scaleX(0.920);">0.00</div>
<div class="r" style="left:627.6px;top:385.6px;width:55.8px;height:14.9px;border:1px solid #dcdcdc;background:#fff;"></div>
<div class="t" style="left:631.60px;top:389.76px;font-size:7.5px;color:#262626;transform:scaleX(0.947);">centimeters</div>
<svg style="left:675.9px;top:391.85px" width="4" height="3"><path d="M0 0H4L2 2.8Z" fill="#222"/></svg>
<div class="r" style="left:686.5px;top:385.6px;width:51.3px;height:14.9px;border:1px solid #dcdcdc;background:#fff;"></div>
<div class="t" style="left:690.50px;top:389.76px;font-size:7.5px;color:#262626;transform:scaleX(0.920);">2</div>
<div class="r" style="left:743.9px;top:385.6px;width:88.7px;height:14.9px;border:1px solid #dcdcdc;background:#fff;"></div>
<div class="t" style="left:747.90px;top:389.76px;font-size:7.5px;color:#9a9a9a;transform:scaleX(0.920);">Enter weight</div>
<div class="r" style="left:835.4px;top:385.6px;width:95px;height:14.9px;border:1px solid #dcdcdc;background:#fff;"></div>
<div class="t" style="left:839.40px;top:389.76px;font-size:7.5px;color:#262626;transform:scaleX(0.920);">pounds</div>
<svg style="left:922.9px;top:391.85px" width="4" height="3"><path d="M0 0H4L2 2.8Z" fill="#222"/></svg>
<div class="r" style="left:346.2px;top:411.3px;width:89.3px;height:14.9px;border:1px solid #dcdcdc;background:#fff;"></div>
<div class="t" style="left:350.20px;top:415.46px;font-size:7.5px;color:#262626;transform:scaleX(0.920);">0.00</div>
<div class="r" style="left:441.2px;top:411.3px;width:88.6px;height:14.9px;border:1px solid #dcdcdc;background:#fff;"></div>
<div class="t" style="left:445.20px;top:415.46px;font-size:7.5px;color:#262626;transform:scaleX(0.920);">0.00</div>
<div class="r" style="left:535.5px;top:411.3px;width:89.2px;height:14.9px;border:1px solid #dcdcdc;background:#fff;"></div>
<div class="t" style="left:539.50px;top:415.46px;font-size:7.5px;color:#262626;transform:scaleX(0.920);">0.00</div>
<div class="r" style="left:627.6px;top:411.3px;width:55.8px;height:14.9px;border:1px solid #dcdcdc;background:#fff;"></div>
<div class="t" style="left:631.60px;top:415.46px;font-size:7.5px;color:#262626;transform:scaleX(0.947);">centimeters</div>
<svg style="left:675.9px;top:417.55px" width="4" height="3"><path d="M0 0H4L2 2.8Z" fill="#222"/></svg>
<div class="r" style="left:686.5px;top:411.3px;width:51.3px;height:14.9px;border:1px solid #dcdcdc;background:#fff;"></div>
<div class="t" style="left:690.50px;top:415.46px;font-size:7.5px;color:#262626;transform:scaleX(0.920);">0</div>
<div class="r" style="left:743.9px;top:411.3px;width:88.7px;height:14.9px;border:1px solid #dcdcdc;background:#fff;"></div>
<div class="t" style="left:747.90px;top:415.46px;font-size:7.5px;color:#262626;transform:scaleX(0.920);">0.00</div>
<div class="r" style="left:835.4px;top:411.3px;width:95px;height:14.9px;border:1px solid #dcdcdc;background:#fff;"></div>
<div class="t" style="left:839.40px;top:415.46px;font-size:7.5px;color:#262626;transform:scaleX(0.920);">pounds</div>
<svg style="left:922.9px;top:417.55px" width="4" height="3"><path d="M0 0H4L2 2.8Z" fill="#222"/></svg>
<div class="r" style="left:346.2px;top:436.9px;width:89.3px;height:14.9px;border:1px solid #dcdcdc;background:#fff;"></div>
<div class="t" style="left:350.20px;top:441.06px;font-size:7.5px;color:#262626;transform:scaleX(0.920);">0.00</div>
<div class="r" style="left:441.2px;top:436.9px;width:88.6px;height:14.9px;border:1px solid #dcdcdc;background:#fff;"></div>
<div class="t" style="left:445.20px;top:441.06px;font-size:7.5px;color:#262626;transform:scaleX(0.920);">0.00</div>
<div class="r" style="left:535.5px;top:436.9px;width:89.2px;height:14.9px;border:1px solid #dcdcdc;background:#fff;"></div>
<div class="t" style="left:539.50px;top:441.06px;font-size:7.5px;color:#262626;transform:scaleX(0.920);">0.00</div>
<div class="r" style="left:627.6px;top:436.9px;width:55.8px;height:14.9px;border:1px solid #dcdcdc;background:#fff;"></div>
<div class="t" style="left:631.60px;top:441.06px;font-size:7.5px;color:#262626;transform:scaleX(0.947);">centimeters</div>
<svg style="left:675.9px;top:443.15px" width="4" height="3"><path d="M0 0H4L2 2.8Z" fill="#222"/></svg>
<div class="r" style="left:686.5px;top:436.9px;width:51.3px;height:14.9px;border:1px solid #dcdcdc;background:#fff;"></div>
<div class="t" style="left:690.50px;top:441.06px;font-size:7.5px;color:#262626;transform:scaleX(0.920);">0</div>
<div class="r" style="left:743.9px;top:436.9px;width:88.7px;height:14.9px;border:1px solid #dcdcdc;background:#fff;"></div>
<div class="t" style="left:747.90px;top:441.06px;font-size:7.5px;color:#9a9a9a;transform:scaleX(0.920);">Enter weight</div>
<div class="r" style="left:835.4px;top:436.9px;width:95px;height:14.9px;border:1px solid #dcdcdc;background:#fff;"></div>
<div class="t" style="left:839.40px;top:441.06px;font-size:7.5px;color:#262626;transform:scaleX(0.920);">grams</div>
<svg style="left:922.9px;top:443.15px" width="4" height="3"><path d="M0 0H4L2 2.8Z" fill="#222"/></svg>
<div class="r" style="left:736.2px;top:572.3px;width:69.7px;height:16.5px;border:1px solid #dadada;background:#f4f4f4;border-radius:2px;"></div>
<div class="r" style="left:807px;top:572.3px;width:65.6px;height:16.5px;border:1px solid #dadada;background:#f4f4f4;border-radius:2px;"></div>
<div class="r" style="left:873.7px;top:572.3px;width:56.6px;height:16.5px;border:1px solid #dadada;background:#f4f4f4;border-radius:2px;"></div>
<svg style="left:742.1px;top:576.5px" width="6" height="8" viewBox="0 0 6 8"><path d="M0.5 0.5 H3.8 L5.5 2.2 V7.5 H0.5Z M1.6 4.3 H4.3 M1.6 5.9 H4.3" fill="none" stroke="#222" stroke-width="0.7"/></svg>
<div class="t" style="left:752.00px;top:577.00px;font-size:7.4px;color:#1a1a1a;font-weight:bold;-webkit-text-stroke-width:0.25px;transform:scaleX(0.738);">View CSV Template</div>
<svg style="left:813.6px;top:576.3px" width="6" height="8" viewBox="0 0 6 8"><path d="M3 5.5 V1 M0.8 3.2 L3 1 L5.2 3.2 M0.3 7.3 H5.7" fill="none" stroke="#111" stroke-width="1"/></svg>
<div class="t" style="left:823.50px;top:577.00px;font-size:7.4px;color:#1a1a1a;font-weight:bold;-webkit-text-stroke-width:0.25px;transform:scaleX(0.735);">Import From CSV</div>
<svg style="left:878.5px;top:576px" width="9" height="8" viewBox="0 0 9 8"><ellipse cx="5" cy="1.8" rx="3.5" ry="1.4" fill="#111"/><path d="M1.5 3.5 Q5 5 8.5 3.5 V5 Q5 6.5 1.5 5Z M1.5 6 Q5 7.5 8.5 6 V7 Q5 8.5 1.5 7Z" fill="#111"/><rect x="0" y="2.3" width="3" height="2.5" fill="#111"/></svg>
<div class="t" style="left:889.50px;top:577.00px;font-size:7.4px;color:#1a1a1a;font-weight:bold;-webkit-text-stroke-width:0.25px;transform:scaleX(0.710);">Save Changes</div>
</body></html>
